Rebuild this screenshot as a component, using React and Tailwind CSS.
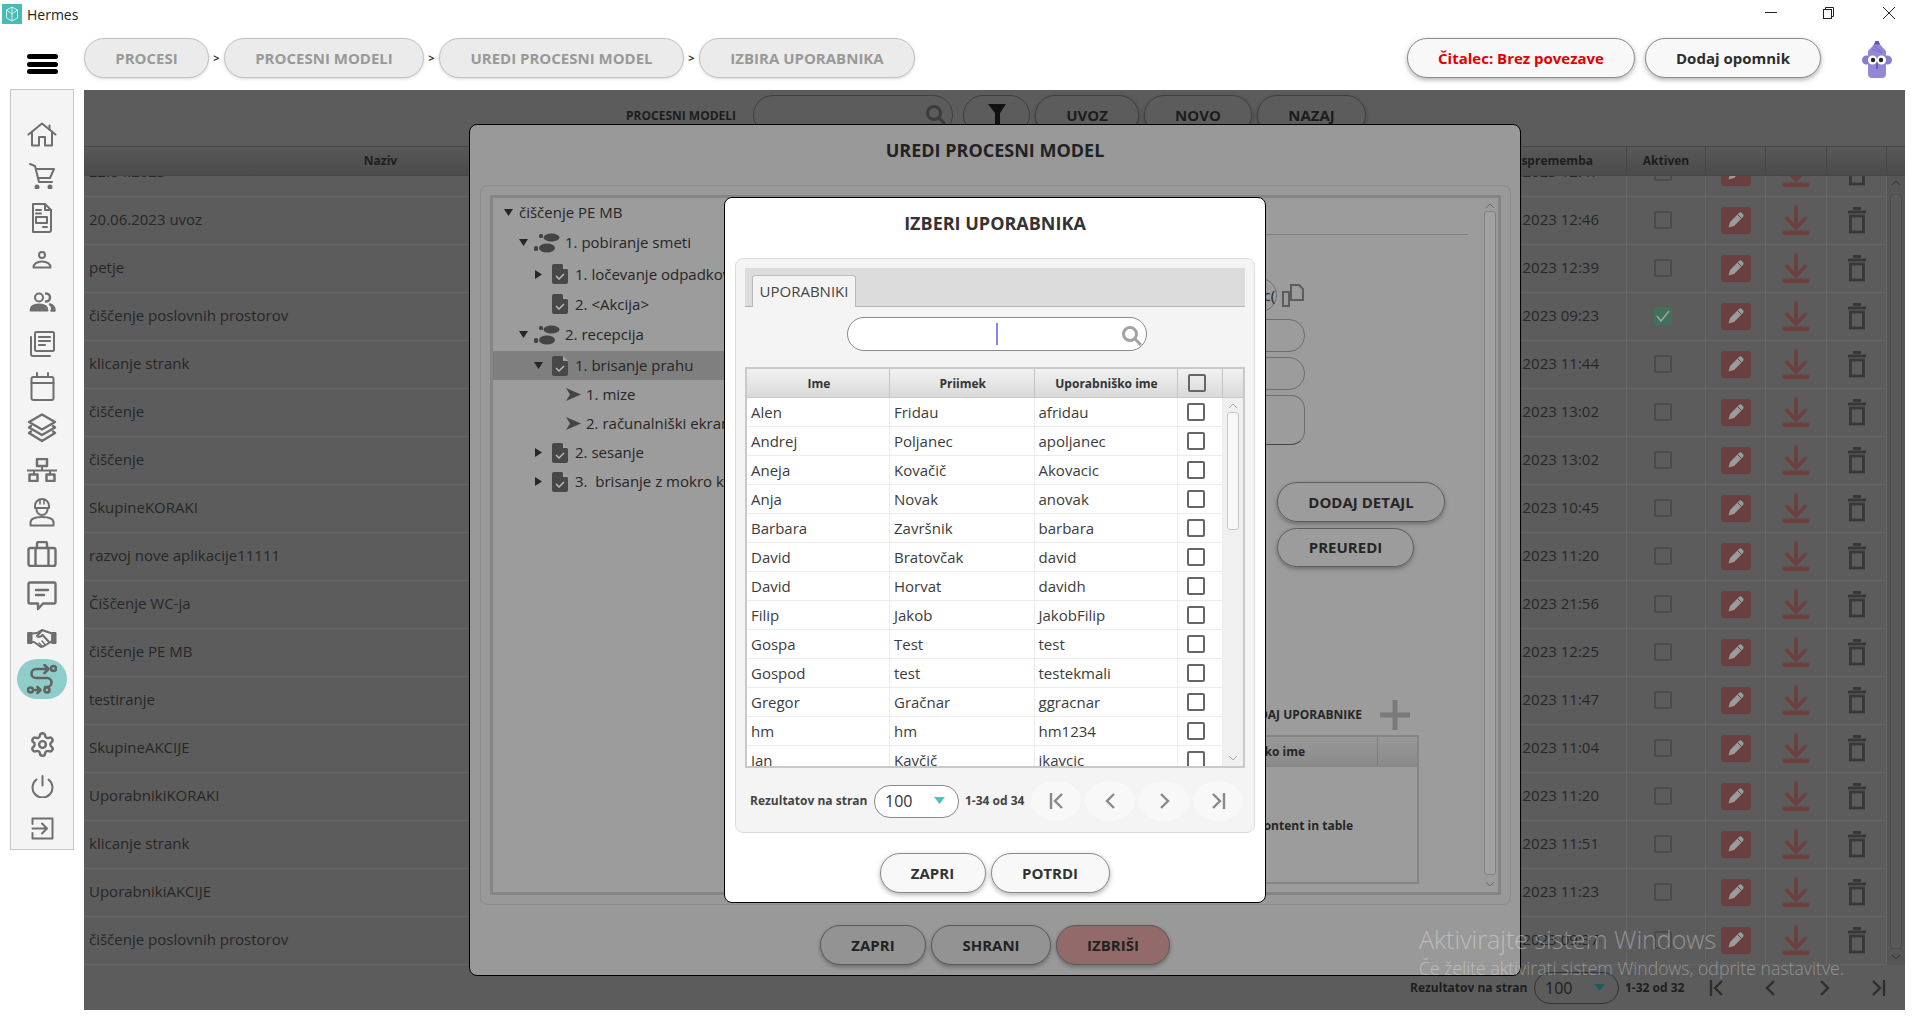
import React from "react";
import { Settings } from "lucide-react";

const S = ({ w, h, vb, children, sw = 2, c = "#6f6f6f" }) => (
  <svg width={w} height={h} viewBox={vb || `0 0 ${w} ${h}`} fill="none" stroke={c} strokeWidth={sw} strokeLinecap="round" strokeLinejoin="round">{children}</svg>
);

const navIcons = [
  <S w={30} h={25}><path d="M1.5 12.5 15 1.5l13.5 11" /><path d="M5 10v13.5h7V15h6v8.5h7V10" /><path d="M22.5 3.5v4" /></S>,
  <S w={26} h={26}><path d="M1 1l5 2 4 16h13" /><path d="M7 6h18l-4 9H9" /><circle cx="8" cy="24" r="1.5" fill="#6f6f6f" /><circle cx="21" cy="24" r="1.5" fill="#6f6f6f" /></S>,
  <S w={22} h={30}><path d="M2 1h12l6 6v20a2 2 0 0 1-2 2H2z" /><path d="M14 1v6h6" /><path d="M5 7h5M5 10.5h5" /><rect x="5" y="14" width="11" height="6" /><path d="M12 24h4" /></S>,
  <S w={20} h={18}><circle cx="10" cy="4" r="3" /><path d="M1.5 16.5c0-3.5 3.5-6 8.5-6s8.5 2.5 8.5 6z" /></S>,
  <S w={27} h={20}><circle cx="10" cy="5.5" r="4" /><path d="M17 1.5a4 4 0 0 1 0 8" strokeWidth="2.5" /><path d="M1.5 18.5c0-4 3.5-6 8.5-6s8.5 2 8.5 6z" fill="#6f6f6f" /><path d="M21 12.5c3 1 4.5 3 4.5 6h-3" strokeWidth="2.5" fill="#6f6f6f" /></S>,
  <S w={26} h={26}><rect x="6" y="1" width="19" height="19" rx="1.5" /><path d="M10 6h11M10 10h11M10 14h6" strokeWidth="2.2" /><path d="M2 6v17a2 2 0 0 0 2 2h17" /></S>,
  <S w={25} h={29}><rect x="1.5" y="5" width="22" height="23" rx="2" /><path d="M1.5 11h22" /><path d="M7 1v4M18 1v4" /></S>,
  <S w={30} h={30} sw={2.4}><path d="M15 1.5 28 9l-13 7.5L2 9z" /><path d="M4 13 2 14.5l13 7.5 13-7.5L26 13" /><path d="M4 18.5 2 20l13 8 13-8-2-1.5" /></S>,
  <S w={30} h={24}><rect x="10" y="1" width="10" height="7" strokeWidth="2.5" /><path d="M0 12.5h30M15 8v4.5M7 12.5V16M23 12.5V16" /><rect x="2.5" y="16.5" width="8" height="6.5" strokeWidth="2.5" /><rect x="19.5" y="16.5" width="8" height="6.5" strokeWidth="2.5" /></S>,
  <S w={26} h={30}><path d="M6 9a7 7 0 0 1 14 0v2H6z" /><path d="M11 2.5V7M15 2.5V7" strokeWidth="1.6" /><path d="M7.5 12.5a5.5 5.5 0 0 0 11 0" /><path d="M1.5 28.5v-3c0-3 3-5.500 11.500-5.500s11.500 2.500 11.500 5.500v3z" /></S>,
  <S w={30} h={26} sw={2.4}><rect x="1.5" y="7" width="27" height="18" rx="2" /><path d="M10 7V2.5a1.5 1.5 0 0 1 1.5-1.5h7a1.5 1.5 0 0 1 1.5 1.5V7" /><path d="M8.5 7v18M21.5 7v18" /></S>,
  <S w={30} h={30} sw={2.4}><path d="M3 1.5h24a1.5 1.5 0 0 1 1.5 1.5v18a1.5 1.5 0 0 1-1.5 1.5H16L11 28v-5.5H3A1.5 1.5 0 0 1 1.5 21V3A1.5 1.5 0 0 1 3 1.5z" /><path d="M9 9h12M9 14h8" /></S>,
  <S w={30} h={19}><path d="M1 3.5h4v11H1zM25 3.5h4v11h-4z" fill="#6f6f6f" strokeWidth="1" /><path d="M5 4.5 10 4l5-3 10 3.500M5 13l2 0 7 5 3-1 5-3 3-2" /><path d="M15 1.5 10 7c1.500 1.500 3.500 1 5.500-1l7 7.500" /><path d="M12 14l3 3M15 12l3 3.500" strokeWidth="1.5" /></S>,
  <S w={30} h={31} c="#636363" sw={2.6}><path d="M21 5H9a4.5 4.5 0 0 0 0 9h11a4.5 4.5 0 0 1 0 9h-2" /><path d="M17.5 1 21.5 5l-4 4" /><circle cx="26.5" cy="4.5" r="2.5" /><circle cx="3.5" cy="26" r="2.5" /><path d="M8 26h5M10.5 23l3 3-3 3" /><circle cx="20" cy="26" r="2.5" /></S>,
  null,
  <S w={23} h={23}><path d="M11.5 1v9.5" /><path d="M5.5 4.5a10 10 0 1 0 12 0" /></S>,
  <S w={23} h={23}><path d="M1.5 7V1.5h20v20h-20V16" /><path d="M1.5 11.5h14M11 6.5l5 5-5 5" /></S>,
];

function Sidebar() {
  return (
    <aside className="ml-[10px] mt-[-1px] flex h-[761px] w-[64px] flex-col items-center border border-[#c6c6c6] bg-[#f4f4f4] pt-[23px]">
      {navIcons.slice(0, 13).map((ic, i) => (
        <div key={i} className="flex h-[42px] w-full shrink-0 items-center justify-center">{ic}</div>
      ))}
      <div className="flex h-[40px] w-[50px] shrink-0 items-center justify-center rounded-[20px] bg-[#8ecdc9]">{navIcons[13]}</div>
      <div className="mt-[24px] flex h-[42px] shrink-0 items-center justify-center"><Settings size={27} color="#6f6f6f" strokeWidth={2.2} /></div>
      <div className="flex h-[42px] shrink-0 items-center justify-center">{navIcons[15]}</div>
      <div className="flex h-[42px] shrink-0 items-center justify-center">{navIcons[16]}</div>
    </aside>
  );
}

const crumbs = [
  ["PROCESI", "w-[125px]"],
  ["PROCESNI MODELI", "w-[200px]"],
  ["UREDI PROCESNI MODEL", "w-[245px]"],
  ["IZBIRA UPORABNIKA", "w-[216px]"],
];

function Mascot() {
  return (
    <svg width="34" height="38" viewBox="0 0 34 38">
      <circle cx="6.5" cy="20" r="4.5" fill="#8a7cc8" />
      <circle cx="27.5" cy="20" r="4.5" fill="#8a7cc8" />
      <path d="M8 11 14 4.5 15.5 1h3l1.5 3.500L26 11v23a4 4 0 0 1-4 4H12a4 4 0 0 1-4-4z" fill="#9587d8" />
      <path d="M15.5 1h3l1.500 3.500h-6z" fill="#6558a8" />
      <path d="M12 9l10 4M14 6l7 5" stroke="#7668ba" strokeWidth="1" />
      <circle cx="12.5" cy="20" r="4.5" fill="#fff" />
      <circle cx="21.5" cy="20" r="4.5" fill="#fff" />
      <circle cx="13" cy="20" r="2.2" fill="#222" />
      <circle cx="21" cy="20" r="2.2" fill="#222" />
      <path d="M17 23v6" stroke="#3f3670" strokeWidth="1" />
    </svg>
  );
}

function TopBars() {
  return (
    <>
      <div className="flex h-[30px] items-center bg-white">
        <svg className="ml-[2px] mt-[-2px]" width="20" height="20" viewBox="0 0 20 20">
          <rect width="20" height="20" fill="#45bdb5" />
          <path d="M10 3 15.5 6v8L10 17l-5.500-3V6zM10 3v14M4.500 6 10 10l5.500-4" fill="none" stroke="#d8f0ee" strokeWidth="1" />
        </svg>
        <span className="ml-[5px] mt-[-2px] text-[14px] text-[#222]">Hermes</span>
        <div className="ml-auto flex h-full items-center">
          <svg className="mr-[45px] mt-[-4px]" width="12" height="2"><rect width="12" height="1" fill="#222" /></svg>
          <svg className="mr-[48px] mt-[-4px]" width="12" height="12" viewBox="0 0 12 12" fill="none" stroke="#222" strokeWidth="1"><rect x="1.5" y="2.5" width="8" height="9" /><path d="M3.5 2.5V.5h8v9h-2" /></svg>
          <svg className="mr-[23px] mt-[-4px]" width="14" height="14" viewBox="0 0 14 14" stroke="#222" strokeWidth="1"><path d="M1 1l12 12M13 1 1 13" /></svg>
        </div>
      </div>
      <div className="flex h-[60px] items-start bg-white pt-[8px]">
        <div className="ml-[27px] mt-[16px] flex h-[20px] w-[31px] flex-col justify-between">
          <span className="h-[5px] rounded-full bg-black" /><span className="h-[5px] rounded-full bg-black" /><span className="h-[5px] rounded-full bg-black" />
        </div>
        <div className="ml-[26px] flex items-center">
          {crumbs.map(([t, w], i) => (
            <React.Fragment key={t}>
              {i > 0 && <span className="flex w-[15px] justify-center text-[11px] font-bold text-[#333]">&gt;</span>}
              <div className={`${w} flex h-[40px] items-center justify-center rounded-[20px] border-[1.5px] border-[#c2c2c2] bg-[#ebebeb] text-[15px] font-bold text-[#999] shadow-[0_1px_3px_rgba(0,0,0,0.15)]`}>{t}</div>
            </React.Fragment>
          ))}
        </div>
        <div className="ml-[492px] flex h-[40px] w-[228px] items-center justify-center rounded-[20px] border-[1.5px] border-[#8c8c8c] bg-[#f8f8f8] text-[15px] font-bold text-[#e00000] shadow-[0_2px_5px_rgba(0,0,0,0.3)]">Čitalec: Brez povezave</div>
        <div className="ml-[10px] flex h-[40px] w-[176px] items-center justify-center rounded-[20px] border-[1.5px] border-[#8c8c8c] bg-[#f8f8f8] text-[15px] font-bold text-[#2d2d2d] shadow-[0_2px_5px_rgba(0,0,0,0.3)]">Dodaj opomnik</div>
        <div className="ml-[39px] mt-[2px]"><Mascot /></div>
      </div>
    </>
  );
}

const rows = [
  ["22.04.2023", "22.04.2023 12:47", false],
  ["20.06.2023 uvoz", "20.06.2023 12:46", false],
  ["petje", "20.06.2023 12:39", false],
  ["čiščenje poslovnih prostorov", "13.06.2023 09:23", true],
  ["klicanje strank", "11.05.2023 11:44", false],
  ["čiščenje", "10.05.2023 13:02", false],
  ["čiščenje", "10.05.2023 13:02", false],
  ["SkupineKORAKI", "09.05.2023 10:45", false],
  ["razvoj nove aplikacije11111", "08.05.2023 11:20", false],
  ["Čiščenje WC-ja", "05.05.2023 21:56", false],
  ["čiščenje PE MB", "05.05.2023 12:25", false],
  ["testiranje", "04.05.2023 11:47", false],
  ["SkupineAKCIJE", "04.05.2023 11:04", false],
  ["UporabnikiKORAKI", "03.05.2023 11:20", false],
  ["klicanje strank", "03.05.2023 11:51", false],
  ["UporabnikiAKCIJE", "03.05.2023 11:23", false],
  ["čiščenje poslovnih prostorov", "02.05.2023 09:37", false],
];

const Edit = () => (
  <div className="flex h-[27px] w-[30px] items-center justify-center rounded-[3px] bg-[#6a3f3f]">
    <svg width="18" height="18" viewBox="0 0 18 18"><path d="M1.5 16.5 3 11 12 2a2 2 0 0 1 2.8 0l1.2 1.2a2 2 0 0 1 0 2.8L7 15z" fill="#9a9a9a" /><path d="M10.5 3.5l4 4" stroke="#6a3f3f" strokeWidth="1" /></svg>
  </div>
);
const Download = () => (
  <svg width="28" height="31" viewBox="0 0 28 31" fill="none" stroke="#6c4040" strokeWidth="3.6" strokeLinecap="round"><path d="M14 2v21M5 13.5l9 9.5 9-9.5" /><path d="M3 28h22" strokeWidth="5" /></svg>
);
const Trash = () => (
  <svg width="20" height="27" viewBox="0 0 20 27" fill="none" stroke="#383838" strokeWidth="2.8"><path d="M1 5h18M6 1.5h8" /><rect x="3.5" y="9" width="13" height="16" /></svg>
);

function BackPage() {
  const grid = "grid grid-cols-[594px_798px_151px_79px_60px_61px_60px]";
  return (
    <div className="flex h-[920px] w-[1821px] flex-col bg-[#5c5c5c] text-[#272727]">
      <div className="flex h-[56px] items-start pl-[542px] pt-[5px]">
        <div className="mt-[12px] w-[127px] whitespace-nowrap text-[12px] font-bold text-[#1c1c1c]">PROCESNI MODELI</div>
        <div className="flex h-[40px] w-[200px] items-center justify-end rounded-[20px] border border-[#3f3f3f] pr-[5px]">
          <svg width="22" height="22" viewBox="0 0 22 22" fill="none" stroke="#3c3c3c" strokeWidth="3"><circle cx="9" cy="9" r="6.5" /><path d="M14 14l6 6" /></svg>
        </div>
        <div className="ml-[10px] flex h-[40px] w-[67px] items-center justify-center rounded-[20px] border border-[#3f3f3f]">
          <svg width="20" height="28" viewBox="0 0 20 28"><path d="M1 3h18l-6 9v14h-5V12z" fill="#111" /></svg>
        </div>
        {[["UVOZ", "ml-[5px] w-[104px]"], ["NOVO", "ml-[5px] w-[108px]"], ["NAZAJ", "ml-[5px] w-[109px]"]].map(([t, c]) => (
          <div key={t} className={`${c} flex h-[40px] items-center justify-center rounded-[20px] border border-[#3f3f3f] text-[15px] font-bold text-[#1c1c1c] shadow-[0_2px_4px_rgba(0,0,0,0.3)]`}>{t}</div>
        ))}
      </div>
      <div className="flex h-[30px] border-y border-[#474747] bg-linear-to-b from-[#585858] to-[#4b4b4b] text-[12px] font-bold text-[#1e1e1e]">
        <div className={`${grid} w-[1803px]`}>
          <div className="flex items-center justify-center border-r border-[#474747]">Naziv</div>
          <div className="border-r border-[#474747]" />
          <div className="flex items-center justify-end whitespace-nowrap border-r border-[#474747] pr-[33px]">Zadnja sprememba</div>
          <div className="flex items-center justify-center border-r border-[#474747]">Aktiven</div>
          <div className="border-r border-[#474747]" />
          <div className="border-r border-[#474747]" />
          <div className="border-r border-[#474747]" />
        </div>
      </div>
      <div className="flex h-[789px] overflow-hidden">
        <div className="mt-[-27px] w-[1803px] shrink-0">
          {rows.map((r, i) => (
            <div key={i} className={`${grid} h-[48px] border-b border-[#666] text-[15px]`}>
              <div className="flex items-center pb-[2px] pl-[5px]">{r[0]}</div>
              <div className="border-r border-[#666]" />
              <div className="flex items-center justify-end border-r border-[#666] pb-[2px] pr-[27px]">{r[1]}</div>
              <div className="flex items-center border-r border-[#666] pb-[1px] pl-[27px]">
                {r[2] ? (
                  <div className="flex h-[18px] w-[18px] items-center justify-center rounded-[2px] bg-[#42705d]">
                    <svg width="14" height="12" viewBox="0 0 14 12" fill="none" stroke="#93a89f" strokeWidth="1.6"><path d="M1 6l4 5 8-10" /></svg>
                  </div>
                ) : (
                  <div className="h-[18px] w-[18px] rounded-[2px] border-2 border-[#4b4b4b]" />
                )}
              </div>
              <div className="flex items-center justify-center border-r border-[#666] pb-[1px]"><Edit /></div>
              <div className="flex items-center justify-center border-r border-[#666] pb-[1px]"><Download /></div>
              <div className="flex items-center justify-center border-r border-[#666] pb-[1px]"><Trash /></div>
            </div>
          ))}
        </div>
        <div className="flex w-[18px] shrink-0 flex-col items-center bg-[#565656]">
          <svg className="mt-[4px]" width="10" height="6" viewBox="0 0 10 6" fill="none" stroke="#333"><path d="M1 5l4-4 4 4" /></svg>
          <div className="mt-[8px] h-[755px] w-[12px] rounded-[3px] border border-[#4c4c4c] bg-[#5a5a5a]" />
          <svg className="mt-[5px]" width="10" height="6" viewBox="0 0 10 6" fill="none" stroke="#333"><path d="M1 1l4 4 4-4" /></svg>
        </div>
      </div>
      <div className="flex h-[45px] items-center pl-[1326px] text-[12px] font-bold text-[#1e1e1e]">
        <div className="w-[117px] whitespace-nowrap">Rezultatov na stran</div>
        <div className="ml-[7px] flex h-[32px] w-[85px] items-center rounded-[16px] border border-[#333] pl-[10px] text-[16px] font-normal">
          100
          <svg className="ml-[22px]" width="12" height="8"><path d="M0 0h11L5.5 7z" fill="#1e5e5a" /></svg>
        </div>
        <div className="ml-[6px] w-[60px] whitespace-nowrap">1-32 od 32</div>
        <div className="ml-[4px]"><Pager c="#2e2e2e" cls="w-[54px] h-[40px]" /></div>
      </div>
    </div>
  );
}

function Pager({ c, cls, round }) {
  const icons = [
    <path d="M2 1v16M13 2 6 9l7 7" />,
    <path d="M9 2 2 9l7 7" />,
    <path d="M2 2l7 7-7 7" />,
    <path d="M13 1v16M2 2l7 7-7 7" />,
  ];
  return (
    <div className={`flex ${round ? "gap-[4px]" : ""}`}>
      {icons.map((p, i) => (
        <div key={i} className={`${cls} flex items-center justify-center ${round ? "rounded-[50%] bg-[#f8f8f8]" : ""}`}>
          <svg width={i === 1 || i === 2 ? 11 : 15} height="18" viewBox={i === 1 || i === 2 ? "0 0 11 18" : "0 0 15 18"} fill="none" stroke={c} strokeWidth="2.4">{p}</svg>
        </div>
      ))}
    </div>
  );
}

const Tri = ({ open }) => (
  <svg width="9" height="9" viewBox="0 0 9 9">
    <path d={open ? "M0 1h9L4.5 8z" : "M1 0l7 4.5L1 9z"} fill="#262626" />
  </svg>
);
const Feet = () => (
  <svg width="26" height="20" viewBox="0 0 26 20" fill="#444">
    <rect x="5" y="1" width="4" height="4" rx="1.5" /><ellipse cx="17.5" cy="4.5" rx="8" ry="4" />
    <rect x="0" y="13" width="4" height="5" rx="1.5" /><ellipse cx="13" cy="15" rx="8" ry="4.5" />
  </svg>
);
const Doc = () => (
  <svg width="16" height="20" viewBox="0 0 16 20">
    <path d="M2 0h8l6 6v12a2 2 0 0 1-2 2H2a2 2 0 0 1-2-2V2a2 2 0 0 1 2-2z" fill="#484848" />
    <path d="M11 0l5 5h-5z" fill="#a3a3a3" />
    <path d="M4 12l3 3 5-5" fill="none" stroke="#bdbdbd" strokeWidth="1.4" />
  </svg>
);
const Leaf = () => (
  <svg width="15" height="13" viewBox="0 0 15 13"><path d="M0 0l15 6.5L0 13l4-6.5z" fill="#444" /></svg>
);

const tree = [
  { t: "čiščenje PE MB", h: "h-[29px]", pl: "pl-[11px]", tri: "o", ic: null, triM: "mr-[6px]" },
  { t: "1. pobiranje smeti", h: "h-[31px]", pl: "pl-[26px]", tri: "o", ic: "f" },
  { t: "1. ločevanje odpadkov", h: "h-[32px]", pl: "pl-[41px]", tri: "c", ic: "d" },
  { t: "2. <Akcija>", h: "h-[28px]", pl: "pl-[56px]", tri: null, ic: "d" },
  { t: "2. recepcija", h: "h-[33px]", pl: "pl-[26px]", tri: "o", ic: "f" },
  { t: "1. brisanje prahu", h: "h-[29px] bg-[#7f7f7f]", pl: "pl-[41px]", tri: "o", ic: "d" },
  { t: "1. mize", h: "h-[29px]", pl: "pl-[73px]", tri: null, ic: "l" },
  { t: "2. računalniški ekran", h: "h-[29px]", pl: "pl-[73px]", tri: null, ic: "l" },
  { t: "2. sesanje", h: "h-[29px]", pl: "pl-[41px]", tri: "c", ic: "d" },
  { t: "3.  brisanje z mokro krpo", h: "h-[29px]", pl: "pl-[41px]", tri: "c", ic: "d" },
];

function EditModal() {
  return (
    <div className="absolute left-[469px] top-[124px] flex h-[852px] w-[1052px] flex-col rounded-[8px] border border-black bg-[#999] text-[#262626]">
      <div className="flex h-[60px] shrink-0 items-start justify-center pt-[12px] text-[18px] font-bold text-[#222]">UREDI PROCESNI MODEL</div>
      <div className="ml-[10px] mr-[9px] h-[720px] shrink-0 rounded-[8px] border border-[#8b8b8b] p-[9px]">
        <div className="flex h-[700px] border-[3px] border-[#858585] bg-[#9c9c9c]">
          <div className="w-[447px] shrink-0 text-[15px]">
            {tree.map((n) => (
              <div key={n.t} className={`${n.h} ${n.pl} flex items-center`}>
                {n.tri && <span className={`${n.triM || "mr-[9px]"} flex w-[9px] shrink-0 justify-center`}><Tri open={n.tri === "o"} /></span>}
                {n.ic === "f" && <span className="ml-[-3px] mr-[5px]"><Feet /></span>}
                {n.ic === "d" && <span className={n.tri ? "mr-[7px]" : "ml-[3px] mr-[7px]"}><Doc /></span>}
                {n.ic === "l" && <span className="mr-[5px]"><Leaf /></span>}
                <span className="whitespace-pre">{n.t}</span>
              </div>
            ))}
          </div>
          <div className="w-[543px] shrink-0">
            <div className="h-[37px] w-[528px] border-b border-[#808080]" />
            <div className="mt-[43px] flex w-[365px] items-center gap-[5px]">
              <div className="flex h-[34px] w-[338px] items-center justify-end rounded-[17px] border border-[#6e6e6e] pr-[1px] text-[15px]">c(</div>
              <svg width="23" height="23" viewBox="0 0 23 23" fill="none" stroke="#5c5c5c" strokeWidth="2"><path d="M1 8h6v14H1z" /><path d="M9 1h8l4 4v11H9z" /></svg>
            </div>
            <div className="mt-[7px] h-[33px] w-[365px] rounded-[16px] border border-[#6e6e6e]" />
            <div className="mt-[5px] h-[33px] w-[365px] rounded-[16px] border border-[#6e6e6e]" />
            <div className="mt-[5px] h-[50px] w-[365px] rounded-[14px] border border-[#6e6e6e] border-b-[#444]" />
            <div className="mt-[37px] ml-[337px] flex h-[40px] w-[168px] items-center justify-center rounded-[20px] border border-[#5c5c5c] text-[15px] font-bold shadow-[0_2px_4px_rgba(0,0,0,0.3)]">DODAJ DETAJL</div>
            <div className="mt-[6px] ml-[337px] flex h-[39px] w-[137px] items-center justify-center rounded-[20px] border border-[#5c5c5c] text-[15px] font-bold shadow-[0_2px_4px_rgba(0,0,0,0.3)]">PREUREDI</div>
            <div className="mt-[133px] flex h-[30px] w-[470px] items-center justify-end">
              <span className="whitespace-nowrap text-[12px] font-bold">DODAJ UPORABNIKE</span>
              <svg className="ml-[18px]" width="30" height="30" viewBox="0 0 30 30"><path d="M12.5 0h5v12.5H30v5H17.5V30h-5V17.5H0v-5h12.500z" fill="#7a7a7a" /></svg>
            </div>
            <div className="mt-[5px] ml-[60px] flex h-[149px] w-[419px] flex-col border-[2px] border-[#858585]">
              <div className="flex h-[30px] shrink-0 border-b border-[#858585] bg-linear-to-b from-[#989898] to-[#8a8a8a] text-[12px] font-bold">
                <div className="flex w-[376px] items-center justify-end border-r border-[#7c7c7c] pr-[72px]">Uporabniško ime</div>
              </div>
              <div className="flex flex-1 items-center justify-end bg-[#9c9c9c] pr-[64px] pt-[3px] text-[12px] font-bold">
                <span className="whitespace-nowrap">No content in table</span>
              </div>
            </div>
          </div>
          <div className="flex w-[13px] flex-col items-center">
            <svg className="mt-[5px]" width="10" height="6" viewBox="0 0 10 6" fill="none" stroke="#6c6c6c"><path d="M1 5l4-4 4 4" /></svg>
            <div className="mt-[2px] h-[664px] w-[12px] rounded-[3px] border border-[#818181] bg-[#a2a2a2]" />
            <svg className="mt-[6px]" width="10" height="6" viewBox="0 0 10 6" fill="none" stroke="#6c6c6c"><path d="M1 1l4 4 4-4" /></svg>
          </div>
        </div>
      </div>
      <div className="mt-[20px] flex justify-center gap-[5px] text-[15px] font-bold text-[#222]">
        <div className="flex h-[40px] w-[106px] items-center justify-center rounded-[20px] border border-[#5a5a5a] bg-[#939393] shadow-[0_2px_4px_rgba(0,0,0,0.3)]">ZAPRI</div>
        <div className="flex h-[40px] w-[120px] items-center justify-center rounded-[20px] border border-[#5a5a5a] bg-[#939393] shadow-[0_2px_4px_rgba(0,0,0,0.3)]">SHRANI</div>
        <div className="flex h-[40px] w-[114px] items-center justify-center rounded-[20px] border border-[#5a5a5a] bg-[#936a6a] shadow-[0_2px_4px_rgba(0,0,0,0.3)]">IZBRIŠI</div>
      </div>
    </div>
  );
}

const users = [
  ["Alen", "Fridau", "afridau"],
  ["Andrej", "Poljanec", "apoljanec"],
  ["Aneja", "Kovačič", "Akovacic"],
  ["Anja", "Novak", "anovak"],
  ["Barbara", "Završnik", "barbara"],
  ["David", "Bratovčak", "david"],
  ["David", "Horvat", "davidh"],
  ["Filip", "Jakob", "JakobFilip"],
  ["Gospa", "Test", "test"],
  ["Gospod", "test", "testekmali"],
  ["Gregor", "Gračnar", "ggracnar"],
  ["hm", "hm", "hm1234"],
  ["Jan", "Kavčič", "jkavcic"],
];

const Check = () => <div className="h-[18px] w-[18px] rounded-[2px] border-2 border-[#666] bg-white" />;

function UserModal() {
  const grid = "grid-cols-[143px_144.5px_143px_45.5px]";
  return (
    <div className="absolute left-[724px] top-[197px] flex h-[706px] w-[542px] flex-col rounded-[8px] border border-black bg-white text-[#333]">
      <div className="flex h-[60px] shrink-0 items-start justify-center pt-[12px] text-[18px] font-bold text-[#333]">IZBERI UPORABNIKA</div>
      <div className="mx-[10px] h-[575px] shrink-0 rounded-[8px] border border-[#dcdcdc] bg-[#f4f4f4] p-[9px]">
        <div className="h-[39px] border-b border-[#b4b4b4] bg-[#dcdcdc] pl-[7px] pt-[7px]">
          <div className="flex h-[32px] w-[104px] items-center justify-center rounded-t-[3px] border border-b-0 border-[#bbb] bg-[#f4f4f4] text-[15px] text-[#444]">UPORABNIKI</div>
        </div>
        <div className="ml-[102px] mt-[10px] flex h-[34px] w-[300px] items-center rounded-[17px] border border-[#8a8a8a] bg-white pl-[148px] pr-[3px]">
          <span className="h-[22px] w-[2px] bg-[#8484f5]" />
          <svg className="ml-auto mt-[3px]" width="22" height="22" viewBox="0 0 22 22" fill="none" stroke="#a3a3a3" strokeWidth="3"><circle cx="9" cy="9" r="6.5" /><path d="M14 14l6 6" /></svg>
        </div>
        <div className="mt-[16px] flex h-[401px] flex-col border-2 border-[#c9c9c9]">
          <div className="flex h-[29px] shrink-0 border-b border-[#c9c9c9] bg-linear-to-b from-[#f2f2f2] to-[#d9d9d9] text-[12px] font-bold text-[#333]">
            <div className={`grid ${grid}`}>
              <div className="flex items-center justify-center border-r border-[#c4c4c4] pl-[2px] pt-[2px]">Ime</div>
              <div className="flex items-center justify-center border-r border-[#c4c4c4] pl-[2px] pt-[2px]">Priimek</div>
              <div className="flex items-center justify-center border-r border-[#c4c4c4] pl-[2px] pt-[2px]">Uporabniško ime</div>
              <div className="flex items-center justify-center border-r border-[#c4c4c4] pr-[5px]"><div className="h-[18px] w-[18px] rounded-[2px] border-2 border-[#666]" /></div>
            </div>
          </div>
          <div className="flex min-h-0 flex-1 overflow-hidden bg-white">
            <div className="shrink-0">
              {users.map((u, i) => (
                <div key={i} className={`grid ${grid} h-[29px] border-b border-[#ececec] text-[15px] text-[#3c3c3c]`}>
                  <div className="flex items-center border-r border-[#ececec] pl-[4px]">{u[0]}</div>
                  <div className="flex items-center border-r border-[#ececec] pl-[4px]">{u[1]}</div>
                  <div className="flex items-center border-r border-[#ececec] pl-[4px]">{u[2]}</div>
                  <div className="flex items-center justify-center border-r border-[#ececec] pr-[7px]"><Check /></div>
                </div>
              ))}
            </div>
            <div className="flex w-[20px] shrink-0 flex-col items-center bg-[#f0f0f0]">
              <svg className="mt-[5px]" width="10" height="6" viewBox="0 0 10 6" fill="none" stroke="#aaa"><path d="M1 5l4-4 4 4" /></svg>
              <div className="mt-[3px] h-[118px] w-[12px] rounded-[3px] border border-[#c8c8c8] bg-[#f8f8f8]" />
              <svg className="mt-auto mb-[5px]" width="10" height="6" viewBox="0 0 10 6" fill="none" stroke="#aaa"><path d="M1 1l4 4 4-4" /></svg>
            </div>
          </div>
        </div>
        <div className="mt-[13px] flex items-center pl-[5px] text-[12px] font-bold text-[#444]">
          <div className="w-[117px] whitespace-nowrap">Rezultatov na stran</div>
          <div className="ml-[7px] flex h-[33px] w-[85px] items-center rounded-[16px] border border-[#8a8a8a] bg-white pl-[10px] text-[16px] font-normal text-[#333]">
            100
            <svg className="ml-[22px]" width="12" height="8"><path d="M0 0h11L5.5 7z" fill="#4cc3bb" /></svg>
          </div>
          <div className="ml-[6px] w-[60px] whitespace-nowrap">1-34 od 34</div>
          <div className="ml-[6px]"><Pager c="#8a8a8a" cls="w-[50px] h-[40px]" round /></div>
        </div>
      </div>
      <div className="mt-[20px] flex justify-center gap-[5px] pr-[1px] text-[15px] font-bold text-[#333]">
        <div className="flex h-[40px] w-[106px] items-center justify-center rounded-[20px] border border-[#8a8a8a] bg-[#f8f8f8] shadow-[0_2px_5px_rgba(0,0,0,0.3)]">ZAPRI</div>
        <div className="flex h-[40px] w-[119px] items-center justify-center rounded-[20px] border border-[#8a8a8a] bg-[#f8f8f8] shadow-[0_2px_5px_rgba(0,0,0,0.3)]">POTRDI</div>
      </div>
    </div>
  );
}

export default function App() {
  return (
    <div className="relative h-[1026px] w-[1919px] overflow-hidden bg-white font-['Open_Sans',sans-serif]">
      <TopBars />
      <div className="flex">
        <Sidebar />
        <div className="ml-[10px]"><BackPage /></div>
      </div>
      <EditModal />
      <UserModal />
      <div className="pointer-events-none absolute left-[1419px] top-[923px] font-light text-white/35">
        <div className="whitespace-nowrap text-[25px] leading-[32px]">Aktivirajte sistem Windows</div>
        <div className="mt-[-2px] whitespace-nowrap text-[17.7px] leading-[30px]">Če želite aktivirati sistem Windows, odprite nastavitve.</div>
      </div>
    </div>
  );
}
